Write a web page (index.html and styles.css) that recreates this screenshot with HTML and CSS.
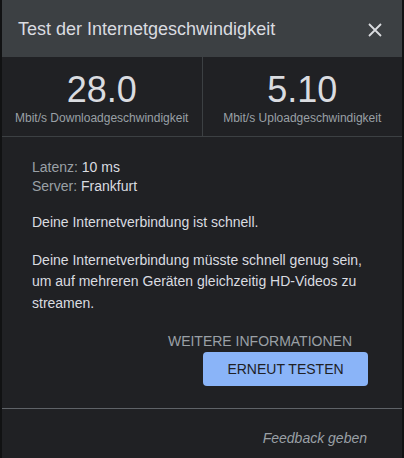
FILE: index.html
```html
<!DOCTYPE html>
<html lang="de">
<head>
    <meta charset="UTF-8">
    <meta name="viewport" content="width=device-width, initial-scale=1.0">
    <title>Test der Internetgeschwindigkeit</title>
    <link rel="stylesheet" href="styles.css">
</head>
<body>
    <div class="dialog">
        <header class="dialog-header">
            <h1>Test der Internetgeschwindigkeit</h1>
            <button class="close" aria-label="Schließen">
                <svg width="14" height="14" viewBox="0 0 14 14">
                    <path d="M1 1L13 13M13 1L1 13" stroke="#dadce0" stroke-width="1.8" fill="none"/>
                </svg>
            </button>
        </header>

        <div class="stats">
            <div class="stat">
                <div class="stat-value">28.0</div>
                <div class="stat-label">Mbit/s Downloadgeschwindigkeit</div>
            </div>
            <div class="stat">
                <div class="stat-value">5.10</div>
                <div class="stat-label">Mbit/s Uploadgeschwindigkeit</div>
            </div>
        </div>

        <section class="details">
            <div class="meta">
                <div><span class="meta-key">Latenz:</span> 10 ms</div>
                <div><span class="meta-key">Server:</span> Frankfurt</div>
            </div>
            <p>Deine Internetverbindung ist schnell.</p>
            <p>Deine Internetverbindung müsste schnell genug sein, um auf mehreren Geräten gleichzeitig HD-Videos zu streamen.</p>

            <div class="actions">
                <a href="#" class="more-link">WEITERE INFORMATIONEN</a>
                <button class="retry-button">ERNEUT TESTEN</button>
            </div>
        </section>

        <footer class="dialog-footer">
            <a href="#" class="feedback-link">Feedback geben</a>
        </footer>
    </div>
</body>
</html>
```

FILE: styles.css
```css
body {
    font-family: "Liberation Sans", Arial, sans-serif;
    margin: 0;
    background-color: #111213;
    color: #dadce0;
}
.dialog {
    margin: 0 2px;
    height: 458px;
    background-color: #202124;
    display: flex;
    flex-direction: column;
}
.dialog-header {
    height: 57px;
    background-color: #3c4043;
    display: flex;
    align-items: center;
    justify-content: space-between;
    padding: 2px 20px 0 16px;
    box-sizing: border-box;
}
.dialog-header h1 {
    margin: 0;
    font-size: 18px;
    font-weight: normal;
    color: #dadce0;
}
.close {
    background: none;
    border: none;
    padding: 0;
    display: flex;
    cursor: pointer;
}
.stats {
    display: flex;
    height: 79px;
    border-bottom: 1px solid #3c4043;
}
.stat {
    flex: 1;
    text-align: center;
    padding-top: 13px;
    box-sizing: border-box;
}
.stat + .stat {
    border-left: 1px solid #3c4043;
}
.stat-value {
    font-size: 36px;
    line-height: 40px;
    color: #dadce0;
}
.stat-label {
    font-size: 12px;
    color: #9aa0a6;
    margin-top: 1px;
}
.details {
    padding: 21px 34px 0 30px;
    font-size: 14px;
    color: #dadce0;
    flex: 1;
}
.meta {
    line-height: 19px;
}
.meta-key {
    color: #9aa0a6;
}
.details p {
    margin: 16px 0 0;
    line-height: 21.5px;
}
.actions {
    display: flex;
    flex-direction: column;
    align-items: flex-end;
    margin-top: 19px;
}
.more-link {
    font-size: 14px;
    color: #9aa0a6;
    text-decoration: none;
    margin-right: 16px;
}
.retry-button {
    margin-top: 3px;
    width: 165px;
    height: 34px;
    background-color: #8ab4f8;
    color: #202124;
    border: none;
    border-radius: 4px;
    font-family: inherit;
    font-size: 14px;
    cursor: pointer;
}
.dialog-footer {
    border-top: 1px solid #5f6368;
    height: 50px;
    display: flex;
    align-items: center;
    justify-content: flex-end;
    padding: 9px 35px 0 0;
    box-sizing: border-box;
}
.feedback-link {
    font-size: 14px;
    font-style: italic;
    color: #9aa0a6;
    text-decoration: none;
}
```
